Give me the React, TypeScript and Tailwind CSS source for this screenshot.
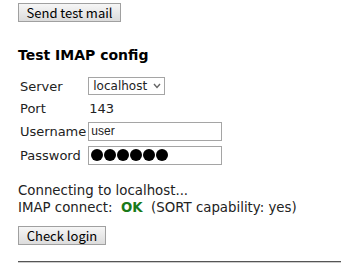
import React from 'react';

const btn =
  'h-[19px] px-[6px] border border-[#a0a0a0] bg-gradient-to-b from-[#f6f6f6] to-[#dcdcdc] text-[13px] leading-none text-black font-["Noto_Sans_CJK_JP",sans-serif]';

export default function App() {
  return (
    <div className="w-[341px] h-[269px] bg-white pl-[18px] pt-[3px] font-['DejaVu_Sans',sans-serif] text-[13.33px] text-[#222]">
      <button className={`${btn} w-[103px]`}>Send test mail</button>

      <h2 className="mt-[22px] text-[14px] font-bold text-black leading-[18px]">Test IMAP config</h2>

      <table className="mt-[9px] border-separate border-spacing-[2px] text-[13px]">
        <tbody>
          <tr>
            <td className="pr-[2px] h-[20px] pt-[2px]">Server</td>
            <td>
              <div className="w-[77px] h-[18px] border border-[#a5a5a5] flex items-center justify-between pl-[4px] pr-[3px] text-[12px]">
                <span>localhost</span>
                <svg width="8" height="6" viewBox="0 0 8 6">
                  <path d="M1 1 L4 4.5 L7 1" stroke="#666" strokeWidth="1.4" fill="none" />
                </svg>
              </div>
            </td>
          </tr>
          <tr>
            <td className="h-[20px]">Port</td>
            <td className="pl-[1px]">143</td>
          </tr>
          <tr>
            <td className="h-[22px]">Username</td>
            <td>
              <div className="w-[134px] h-[19px] border border-[#a5a5a5] flex items-center pl-[2px] text-[12px] font-['Liberation_Sans',sans-serif]">
                user
              </div>
            </td>
          </tr>
          <tr>
            <td className="h-[22px]">Password</td>
            <td>
              <div className="w-[134px] h-[19px] border border-[#a5a5a5] flex items-center pl-[2px] gap-[1px]">
                {[0, 1, 2, 3, 4, 5].map((i) => (
                  <span key={i} className="w-[12px] h-[12px] rounded-full bg-black" />
                ))}
              </div>
            </td>
          </tr>
        </tbody>
      </table>

      <div className="mt-[14px] leading-[17px]">
        <div>Connecting to localhost...</div>
        <div>
          IMAP connect:&nbsp; <b className="text-[#1a7a1a]">OK</b>&nbsp; (SORT capability: yes)
        </div>
      </div>

      <button className={`${btn} w-[88px] mt-[10px] block`}>Check login</button>

      <div className="mt-[16px] h-[2px] bg-[#555] border-b border-[#ccc]" />
    </div>
  );
}
